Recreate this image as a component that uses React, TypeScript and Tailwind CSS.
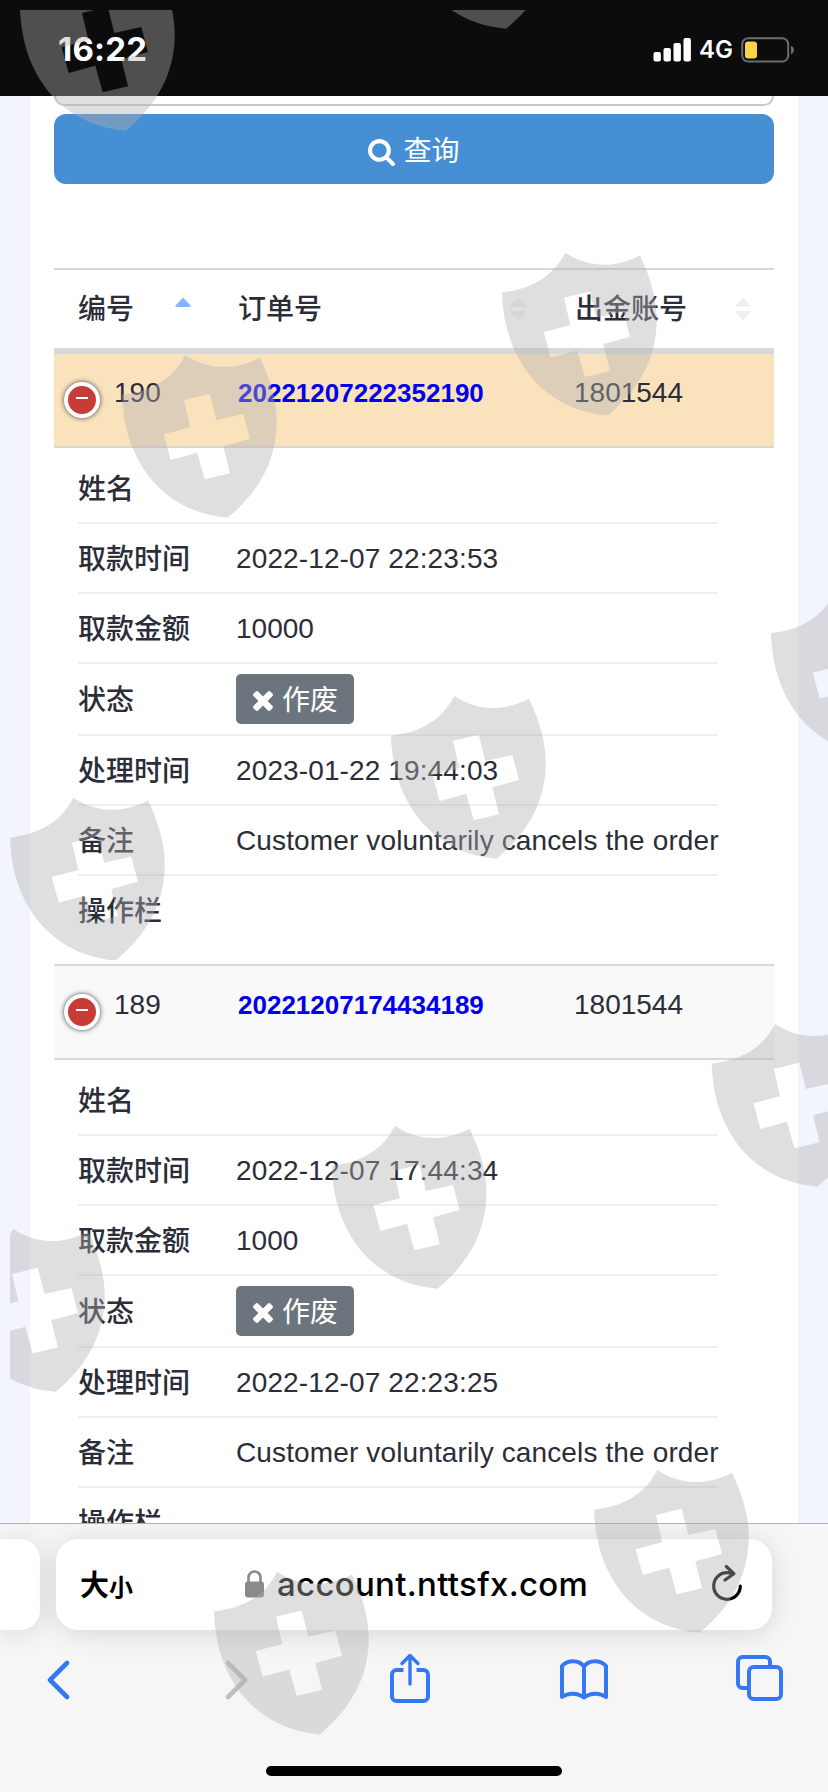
import type { ReactNode } from "react";

interface Order {
  id: string;
  orderNo: string;
  account: string;
  highlighted: boolean;
  withdrawTime: string;
  amount: string;
  processTime: string;
  remark: string;
}

const ORDERS: Order[] = [
  {
    id: "190",
    orderNo: "20221207222352190",
    account: "1801544",
    highlighted: true,
    withdrawTime: "2022-12-07 22:23:53",
    amount: "10000",
    processTime: "2023-01-22 19:44:03",
    remark: "Customer voluntarily cancels the order",
  },
  {
    id: "189",
    orderNo: "20221207174434189",
    account: "1801544",
    highlighted: false,
    withdrawTime: "2022-12-07 17:44:34",
    amount: "1000",
    processTime: "2022-12-07 22:23:25",
    remark: "Customer voluntarily cancels the order",
  },
];

// Top-left corner of every watermark shield.
const SHIELDS = [
  [20, -32],
  [400.5, -134],
  [502, 252.7],
  [122, 355],
  [771, 593.5],
  [391, 696],
  [10, 797.7],
  [711.7, 1024],
  [331.7, 1126],
  [-50, 1229],
  [594, 1470],
  [214, 1571.7],
];

function StatusBar() {
  return (
    <header className="flex h-24 shrink-0 items-center bg-[#0c0c0c] pt-1 pr-[33px] pl-[58px] font-[Inter,sans-serif] text-white">
      <span className="-mt-0.5 text-[33px] leading-none font-bold tracking-[0.2px]">16:22</span>
      <svg className="ml-auto" width="38" height="24" viewBox="0 0 38 24" fill="currentColor">
        <rect x="0.500" y="14" width="7.400" height="9.500" rx="2" />
        <rect x="10.500" y="10" width="7.400" height="13.500" rx="2" />
        <rect x="20.500" y="5" width="7.400" height="18.500" rx="2" />
        <rect x="30.500" y="0" width="7.400" height="23.500" rx="2" />
      </svg>
      <span className="ml-2 w-[34px] text-[24px] leading-none font-semibold">4G</span>
      <svg className="ml-2" width="54" height="26" viewBox="0 0 54 26">
        <rect x="1.200" y="1.200" width="46" height="23.400" rx="6" fill="none" stroke="#6c6c6c" strokeWidth="2" />
        <rect x="4" y="4.400" width="12" height="17" rx="3" fill="#f7d348" />
        <path d="M50 8.800c4 1.600 4 6.800 0 8.400z" fill="#6c6c6c" />
      </svg>
    </header>
  );
}

function SearchIcon() {
  return (
    <svg width="27" height="27" viewBox="64 128 1664 1664" fill="currentColor">
      <path d="M1216 832q0-185-131.500-316.500t-316.500-131.500-316.500 131.500-131.500 316.500 131.500 316.500 316.500 131.500 316.500-131.500 131.500-316.500zm512 832q0 52-38 90t-90 38q-54 0-90-38l-343-342q-179 124-399 124-143 0-273.500-55.500t-225-150-150-225-55.500-273.500 55.500-273.500 150-225 225-150 273.500-55.500 273.500 55.500 225 150 150 225 55.500 273.500q0 220-124 399l343 343q37 37 37 90z" />
    </svg>
  );
}

function TimesIcon() {
  return (
    <svg width="20" height="20" viewBox="302 366 1188 1188" fill="currentColor">
      <path d="M1490 1322q0 40-28 68l-136 136q-28 28-68 28t-68-28l-294-294-294 294q-28 28-68 28t-68-28l-136-136q-28-28-28-68t28-68l294-294-294-294q-28-28-28-68t28-68l136-136q28-28 68-28t68 28l294 294 294-294q28-28 68-28t68 28l136 136q28 28 28 68t-28 68l-294 294 294 294q28 28 28 68z" />
    </svg>
  );
}

function SortIcon({ active = false }: { active?: boolean }) {
  return (
    <svg width="16" height="24" viewBox="0 0 16 24">
      <path
        d="M7 1.500q1-1 2 0l6.500 7q.5 1.500-1 1.500h-13q-1.500 0-1-1.500z"
        fill={active ? "#84b4fc" : "#f0f0f0"}
      />
      {active ? null : <path d="M7 22.500q1 1 2 0l6.500-7q.5-1.500-1-1.500h-13q-1.500 0-1 1.500z" fill="#f0f0f0" />}
    </svg>
  );
}

function DetailRow({ label, children }: { label: string; children?: ReactNode }) {
  return (
    <li className="flex min-h-[70px] items-center border-b-2 border-[#efefef] last:border-b-0 last:pb-0.5">
      <span className="w-[158px] shrink-0 pt-1 font-medium">{label}</span>
      {children}
    </li>
  );
}

function OrderBlock({ order }: { order: Order }) {
  return (
    <>
      <div
        className={
          order.highlighted
            ? "flex h-[92px] items-start bg-[#fae2bd]"
            : "flex h-[94px] items-start border-t-2 border-[#d8d8d8] bg-[#f9f9f9]"
        }
      >
        <span className="mt-7 ml-[10px] flex size-9 items-center justify-center rounded-full border-4 border-white bg-[#c83c37] shadow-[0_0_5px_#444]">
          <span className="-mt-1 h-0.5 w-3 bg-white" />
        </span>
        <span className="mt-[23px] ml-[14px] w-[124px] leading-8">{order.id}</span>
        <span className="mt-[23px] w-[336px] text-[26px] leading-8 font-bold text-[#0000ee]">{order.orderNo}</span>
        <span className="mt-[23px] leading-8">{order.account}</span>
      </div>
      <div className="h-[518px] border-t-2 border-[#d8d8d8] pt-1.5 pl-6">
        <ul className="w-[640px]">
          <DetailRow label="姓名" />
          <DetailRow label="取款时间">
            <span className="pt-0.5 tracking-[0.12px]">{order.withdrawTime}</span>
          </DetailRow>
          <DetailRow label="取款金额">
            <span className="pt-0.5">{order.amount}</span>
          </DetailRow>
          <DetailRow label="状态">
            <span className="my-[10px] flex h-[50px] w-[118px] items-center gap-[9px] rounded-[5px] bg-[#6c757d] pl-[17px] text-white">
              <span className="mt-1">
                <TimesIcon />
              </span>
              <span className="pt-1 leading-8">作废</span>
            </span>
          </DetailRow>
          <DetailRow label="处理时间">
            <span className="pt-0.5 tracking-[0.12px]">{order.processTime}</span>
          </DetailRow>
          <DetailRow label="备注">
            <span className="pt-0.5 tracking-[0.13px] whitespace-nowrap">{order.remark}</span>
          </DetailRow>
          <DetailRow label="操作栏" />
        </ul>
      </div>
    </>
  );
}

function WithdrawPage() {
  return (
    <main className="h-[1427px] shrink-0 overflow-hidden bg-[#f2f5fe] px-[30px]">
      <div className="h-full bg-white px-6 text-[28px] leading-8 text-[#2b2d38]">
        <div className="h-[10px] rounded-b-xl border-2 border-t-0 border-[#c9c9c9]" />
        <button className="mt-2 flex h-[70px] w-full items-center justify-center gap-2 rounded-xl bg-[#468fd4] text-white">
          <span className="mt-1.5">
            <SearchIcon />
          </span>
          <span className="pt-1.5">查询</span>
        </button>

        <div className="mt-[84px] flex h-[86px] items-center border-t-2 border-b-[6px] border-[#d8d8d8] pl-6 font-medium">
          <span className="w-[97px] pt-0.5">编号</span>
          <SortIcon active />
          <span className="ml-[47px] w-[272px] pt-0.5">订单号</span>
          <SortIcon />
          <span className="ml-[49px] w-[160px] pt-0.5">出金账号</span>
          <SortIcon />
        </div>
        {ORDERS.map((o) => (
          <OrderBlock key={o.id} order={o} />
        ))}
      </div>
    </main>
  );
}

function Chevron({ className, d }: { className: string; d: string }) {
  return (
    <svg className={className} width="24" height="40" viewBox="0 0 24 40" fill="none" stroke="currentColor" strokeWidth="4.600" strokeLinecap="round" strokeLinejoin="round">
      <path d={d} />
    </svg>
  );
}

function BrowserBar() {
  return (
    <footer className="flex grow flex-col overflow-hidden border-t border-[#b2b2b4] bg-[#f6f6f7]">
      <div className="mt-[15px] flex gap-4">
        <div className="h-[91px] w-10 rounded-r-[20px] bg-white shadow-[0_3px_28px_rgba(0,0,0,0.13)]" />
        <div className="flex h-[91px] w-[716px] items-center rounded-[22px] bg-white pl-6 text-black shadow-[0_3px_28px_rgba(0,0,0,0.13)]">
          <div className="flex w-[165px] items-baseline font-['Noto_Sans_CJK_SC',sans-serif] leading-8 font-bold">
            <span className="text-[29px]">大</span>
            <span className="text-[24px]">小</span>
          </div>
          <svg className="-mt-0.5" width="19" height="28" viewBox="0 0 19 28">
            <path d="M3.500 13V7.500a6 6 0 0 1 12 0V13" fill="none" stroke="#8a898e" strokeWidth="2.600" />
            <rect y="11.500" width="19" height="16" rx="3" fill="#8a898e" />
          </svg>
          <span className="-mt-0.5 ml-[13px] w-[434px] font-[Inter,sans-serif] text-[33px] leading-10 font-medium tracking-[0.3px]">
            account.nttsfx.com
          </span>
          <svg className="-mt-1.5" width="32" height="38" viewBox="0 0 32 38" fill="none" stroke="currentColor" strokeWidth="3.200" strokeLinecap="round" strokeLinejoin="round">
            <path d="M29.300 23A13.300 13.300 0 1 1 16 9.700Q19 9.700 22 10.500M15.300 3.500l7.600 7.200-8.900 6.300" />
          </svg>
        </div>
      </div>

      <nav className="mt-[23px] flex h-[50px] items-center text-[#3478f6]">
        <Chevron className="ml-[46px] mt-1" d="M21 3 4 20l17 17" />
        <Chevron className="ml-[155px] mt-1 text-[#bfbfc1]" d="M3 3l17 17L3 37" />
        <svg className="ml-[141px]" width="40" height="50" viewBox="0 0 40 50" fill="none" stroke="currentColor" strokeWidth="4" strokeLinecap="round" strokeLinejoin="round">
          <path d="M13.500 17H6.500a4.500 4.500 0 0 0-4.500 4.500v22A4.500 4.500 0 0 0 6.500 48h27a4.500 4.500 0 0 0 4.500-4.500v-22a4.500 4.500 0 0 0-4.500-4.500H26.500" strokeLinecap="butt" />
          <path d="M20 31V3M12 10.500 20 2.500l8 8" strokeWidth="3.400" />
        </svg>
        <svg className="ml-[130px] mt-1" width="48" height="42" viewBox="0 0 48 42" fill="none" stroke="currentColor" strokeWidth="4" strokeLinejoin="round">
          <path d="M24 7.500V38.500M24 7.500C19 .500 8 .500 2 7V38C8 33.500 18 33.500 24 38.500 30 33.500 40 33.500 46 38V7C40 .500 29 .500 24 7.500z" />
        </svg>
        <svg className="ml-[128px]" width="47" height="46" viewBox="0 0 47 46" fill="none" stroke="currentColor" strokeWidth="4">
          <rect x="13" y="12" width="32" height="32" rx="4.500" />
          <path d="M11 33H6.500A4.500 4.500 0 0 1 2 28.500v-22A4.500 4.500 0 0 1 6.500 2h23A4.500 4.500 0 0 1 34 6.500V11" />
        </svg>
      </nav>
      <div className="mx-auto mt-auto mb-4 h-2.5 w-[296px] rounded-full bg-black" />
    </footer>
  );
}

function Watermark() {
  return (
    <svg
      className="pointer-events-none absolute top-[10px] left-[10px]"
      width="818"
      height="1782"
      viewBox="10 10 818 1782"
      fill="#b1b1b1"
      fillOpacity="0.407"
      fillRule="evenodd"
    >
      {SHIELDS.map(([x, y]) => (
        <path
          key={`${x}-${y}`}
          transform={`translate(${x} ${y})`}
          d="M0 39.700C32 36 51 23 63.300 0 86 15 112 16 138 2.700 150 28 154.700 48 154.700 67 154.700 106 136 138 105.700 162.700 46 158 2 112 0 39.700zM62 45l6.300 27.300-26.600 7 7 25.700 26.600-7.300 7.400 26.600 25.300-6-6.700-27 26.700-7.300-6.700-25-27 6-6.600-26.300z"
        />
      ))}
    </svg>
  );
}

export default function App() {
  return (
    <div className="relative flex h-[1792px] w-[828px] flex-col overflow-hidden bg-white font-['Liberation_Sans','Noto_Sans_CJK_SC',sans-serif]">
      <StatusBar />
      <WithdrawPage />
      <BrowserBar />
      <Watermark />
    </div>
  );
}
